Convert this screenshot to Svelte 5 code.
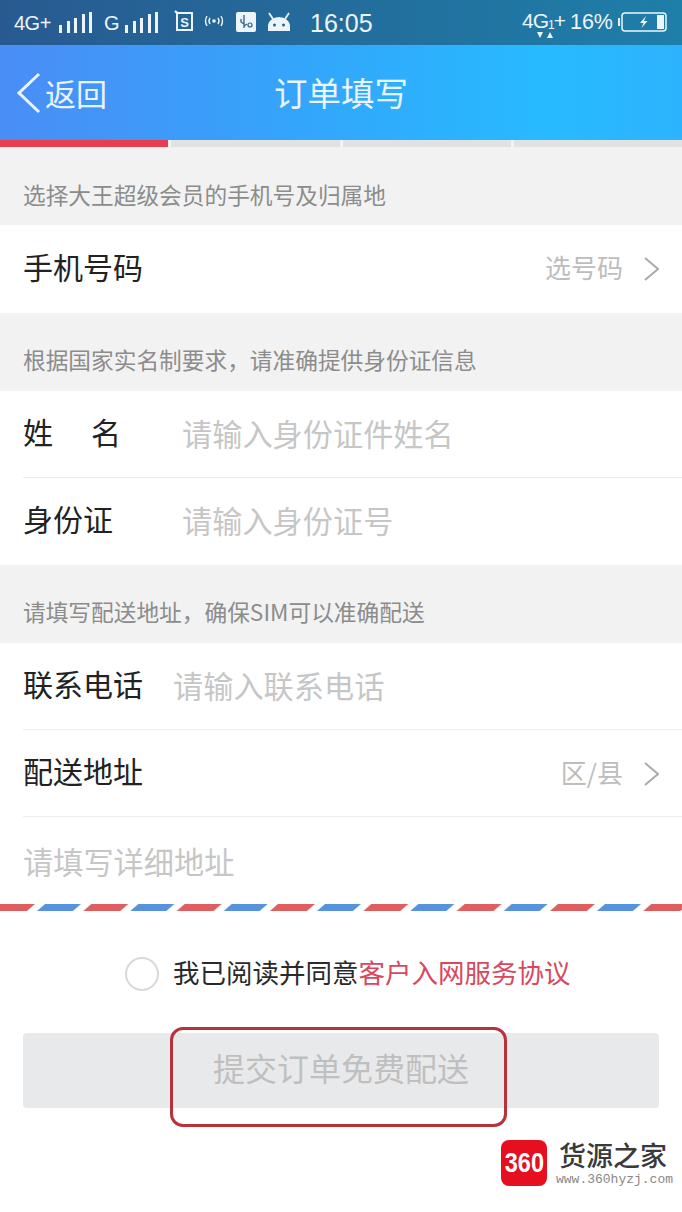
<script>
  const steps = [true, false, false, false];
</script>

<div class="page">
  <header class="status">
    <span class="net">4G+</span>
    <svg class="bars" width="34" height="22" viewBox="0 0 34 22"><g fill="#eef5fa"><rect x="0" y="13" width="3" height="8"/><rect x="8" y="9" width="3" height="12"/><rect x="15" y="6" width="3" height="15"/><rect x="23" y="2" width="3" height="19"/><rect x="30" y="0" width="3" height="21"/></g></svg>
    <span class="net g">G</span>
    <svg class="bars" width="34" height="22" viewBox="0 0 34 22"><g fill="#eef5fa"><rect x="0" y="13" width="3" height="8"/><rect x="8" y="9" width="3" height="12"/><rect x="15" y="6" width="3" height="15"/><rect x="23" y="2" width="3" height="19"/><rect x="30" y="0" width="3" height="21"/></g></svg>
    <svg class="ic-s" width="20" height="22" viewBox="0 0 20 22"><path d="M1 1l3 2h14v17H3V3z" fill="none" stroke="#eef5fa" stroke-width="2"/><text x="10.500" y="16.500" text-anchor="middle" font-size="13" font-weight="700" font-family="Liberation Sans" fill="#eef5fa">S</text></svg>
    <svg class="ic-w" width="22" height="14" viewBox="0 0 22 14"><g fill="none" stroke="#eef5fa" stroke-width="1.4"><path d="M4 2q-3 5 0 10M7 4q-2 3 0 6M18 2q3 5 0 10M15 4q2 3 0 6"/></g><circle cx="11" cy="7" r="1.8" fill="#eef5fa"/></svg>
    <svg class="ic-u" width="20" height="20" viewBox="0 0 20 20"><rect width="20" height="20" rx="2" fill="#eef5fa"/><path d="M8 3v13M8 12l-3-2V7M8 14l3-2" fill="none" stroke="#27628f" stroke-width="1.3"/><circle cx="14" cy="13" r="2" fill="none" stroke="#27628f" stroke-width="1.2"/></svg>
    <svg class="ic-a" width="24" height="20" viewBox="0 0 24 20"><path d="M1 19v-5a11 9 0 0 1 22 0v5z" fill="#eef5fa"/><path d="M6 7L2 1M18 7l4-6" stroke="#eef5fa" stroke-width="1.8"/><circle cx="7.500" cy="13" r="1.500" fill="#27628f"/><circle cx="16.500" cy="13" r="1.500" fill="#27628f"/></svg>
    <span class="time">16:05</span>
    <span class="right">
      <span class="net4">4G<sub>1</sub>+
        <svg class="arrows" width="16" height="7" viewBox="0 0 16 7"><path d="M0 0h6L3 6zM10 6h6L13 0z" fill="#eef5fa"/></svg>
      </span>
      <span class="pct">16%</span>
      <svg width="49" height="20" viewBox="0 0 49 20"><rect x="0" y="6" width="2" height="8" fill="#eef5fa"/><rect x="4" y="1" width="44" height="18" rx="3" fill="none" stroke="#eef5fa" stroke-width="1.500"/><rect x="39" y="3" width="7" height="14" fill="#eef5fa"/><path d="M28 4l-6 7h3.500l-2 5 6-7h-3.500z" fill="#eef5fa"/></svg>
    </span>
  </header>

  <nav class="nav">
    <svg class="back" width="26" height="42" viewBox="0 0 26 42"><path d="M23 2L3 21l20 19" fill="none" stroke="#e8f4fe" stroke-width="3"/></svg>
    <span class="back-text">返回</span>
    <span class="title">订单填写</span>
  </nav>

  <div class="progress">
    {#each steps as on}
      <span class="step" class:on></span>
    {/each}
  </div>

  <p class="hint first">选择大王超级会员的手机号及归属地</p>
  <div class="row tall">
    <span class="label wide">手机号码</span>
    <span class="picker"><span>选号码</span>
      <svg width="16" height="24" viewBox="0 0 16 24"><path d="M2 1l13 11L2 23" fill="none" stroke="#aaa" stroke-width="2"/></svg>
    </span>
  </div>

  <p class="hint">根据国家实名制要求，请准确提供身份证信息</p>
  <div class="row line">
    <span class="label spaced"><span>姓</span><span>名</span></span>
    <span class="ph id">请输入身份证件姓名</span>
  </div>
  <div class="row">
    <span class="label fixed">身份证</span>
    <span class="ph id">请输入身份证号</span>
  </div>

  <p class="hint">请填写配送地址，确保SIM可以准确配送</p>
  <div class="row line">
    <span class="label wide">联系电话</span>
    <span class="ph tel">请输入联系电话</span>
  </div>
  <div class="row line">
    <span class="label wide">配送地址</span>
    <span class="picker"><span>区/县</span>
      <svg width="16" height="24" viewBox="0 0 16 24"><path d="M2 1l13 11L2 23" fill="none" stroke="#aaa" stroke-width="2"/></svg>
    </span>
  </div>
  <div class="row detail"><span class="ph">请填写详细地址</span></div>

  <svg class="stripe" width="682" height="8" viewBox="0 0 682 8">
    <defs>
      <pattern id="air" width="93.33" height="8" patternUnits="userSpaceOnUse">
        <path d="M-10 8l8-7h37l-8 7z" fill="#df5f61"/>
        <path d="M83.300 8l8-7h37l-8 7z" fill="#df5f61"/>
        <path d="M37 8l8-7h36l-8 7z" fill="#5793dd"/>
      </pattern>
    </defs>
    <rect width="682" height="8" fill="url(#air)"/>
  </svg>

  <div class="agree">
    <span class="circle"></span>
    <span class="agree-text">我已阅读并同意<em>客户入网服务协议</em></span>
  </div>

  <div class="submit-wrap">
    <button class="submit">提交订单免费配送</button>
    <span class="mark"></span>
  </div>

  <div class="brand">
    <span class="logo"><span>360</span></span>
    <span class="brand-text">
      <b>货源之家</b>
      <small>www.360hyzj.com</small>
    </span>
  </div>
</div>

<style>
  :global(body) { margin: 0; background: #fff; }
  .page {
    position: relative;
    width: 682px;
    height: 1212px;
    overflow: hidden;
    background: #fff;
    font-family: "Noto Sans CJK SC", "Liberation Sans", sans-serif;
  }
  .status {
    height: 45px;
    box-sizing: border-box;
    padding: 2px 15px 0 14px;
    display: flex;
    align-items: center;
    background: linear-gradient(90deg, #285a90, #1e7fa8);
    color: #eef5fa;
    font-family: "Liberation Sans", sans-serif;
  }
  .net { font-size: 20px; width: 45px; letter-spacing: -0.5px; }
  .bars { margin-top: -2px; flex: none; }
  .net.g { width: auto; margin-left: 11px; margin-right: 6px; font-size: 20px; }
  .ic-s { margin-left: 15px; margin-top: -5px; }
  .ic-w { margin-left: 9px; margin-top: -5px; }
  .ic-u { margin-left: 11px; margin-top: -4px; }
  .ic-a { margin-left: 11px; margin-top: -4px; }
  .time { font-size: 25px; margin-left: 19px; }
  .right { margin-left: auto; display: flex; align-items: center; gap: 5px; margin-top: -3px; }
  .net4 { position: relative; font-size: 21px; letter-spacing: -1px; margin-top: -3px; }
  .net4 sub { font-size: 12px; vertical-align: -1px; line-height: 0; }
  .arrows { position: absolute; left: 15px; top: 23px; }
  .pct { font-size: 21.500px; }

  .nav {
    height: 95px;
    position: relative;
    display: flex;
    align-items: center;
    padding-left: 16px;
    color: #e8f4fe;
    background: linear-gradient(90deg, #4a8df6 0%, #33a6fb 45%, #27baff 80%, #2db3fd 100%);
  }
  .back { flex: none; }
  .back-text { font-size: 31px; margin-left: 3px; }
  .title {
    position: absolute;
    left: 0;
    right: 0;
    text-align: center;
    font-size: 33.500px;
    padding-bottom: 2px;
  }
  .progress {
    height: 9px;
    display: flex;
    gap: 3px;
    background: #f2f2f2;
  }
  .step { flex: 1; height: 7px; background: #e2e2e2; }
  .step.on { background: #e83f50; }

  .hint {
    margin: 0;
    height: 78px;
    box-sizing: border-box;
    padding: 0 23px 15px;
    display: flex;
    align-items: flex-end;
    background: #f2f2f2;
    color: #8c8c8c;
    font-size: 22.700px;
    line-height: 32px;
  }
  .hint.first { height: 76px; padding-bottom: 14px; }
  .row {
    height: 87px;
    box-sizing: border-box;
    padding: 0 23px;
    display: flex;
    align-items: center;
    background: #fff;
    position: relative;
  }
  .row.tall { height: 88px; }
  .row.line::after {
    content: "";
    position: absolute;
    left: 23px;
    right: 0;
    bottom: 0;
    height: 1px;
    background: #ececec;
  }
  .label { color: #222; font-size: 30px; flex: none; margin-top: -7px; }
  .spaced { display: flex; justify-content: space-between; width: 98px; font-size: 30px; }
  .fixed { width: 98px; }
  .ph { color: #c6c6c6; font-size: 30.200px; margin-top: -4px; }
  .ph.id { margin-left: 61px; }
  .ph.tel { margin-left: 30px; }
  .picker {
    margin-left: auto;
    display: flex;
    align-items: center;
    gap: 20px;
    color: #bdbdbd;
    font-size: 26px;
  }
  .picker > span { margin-top: -5px; }
  .detail { height: 86px; }
  .detail .ph { margin-top: 2px; }

  .stripe { display: block; }

  .agree {
    display: flex;
    align-items: center;
    gap: 14px;
    margin: 46px 0 0 125px;
    height: 34px;
    color: #2a2a2a;
    font-size: 26.500px;
  }
  .agree-text { margin-top: -5px; }
  .circle {
    width: 34px;
    height: 34px;
    box-sizing: border-box;
    flex: none;
    border: 2px solid #d9d9d9;
    border-radius: 50%;
  }
  em { font-style: normal; color: #d8495c; }

  .submit-wrap {
    position: relative;
    margin: 42px 23px 0;
    height: 75px;
  }
  .submit {
    display: block;
    width: 100%;
    height: 100%;
    border: 0;
    border-radius: 4px;
    padding: 0 0 7px;
    background: #e8e9eb;
    color: #bfbfbf;
    font: 32px "Noto Sans CJK SC", sans-serif;
  }
  .mark {
    position: absolute;
    left: 147px;
    top: -6px;
    width: 337px;
    height: 100px;
    box-sizing: border-box;
    border: 3px solid #b8323c;
    border-radius: 13px;
    pointer-events: none;
  }

  .brand {
    position: absolute;
    left: 501px;
    top: 1140px;
    display: flex;
    align-items: flex-start;
    gap: 9px;
  }
  .logo {
    width: 46px;
    height: 46px;
    border-radius: 8px;
    background: #e50f20;
    color: #fff;
    font: 700 28px/46px "Liberation Sans", sans-serif;
    text-align: center;
    display: flex;
    justify-content: center;
  }
  .logo span { display: block; transform: scaleX(0.84); }
  .brand-text { display: flex; flex-direction: column; gap: 2px; }
  .brand-text b {
    font: 500 27px/30px "Noto Sans CJK SC", sans-serif;
    color: #3a3a3a;
    margin-left: 3px;
  }
  .brand-text small {
    font: 13px/16px "Liberation Mono", monospace;
    color: #888;
  }
</style>
